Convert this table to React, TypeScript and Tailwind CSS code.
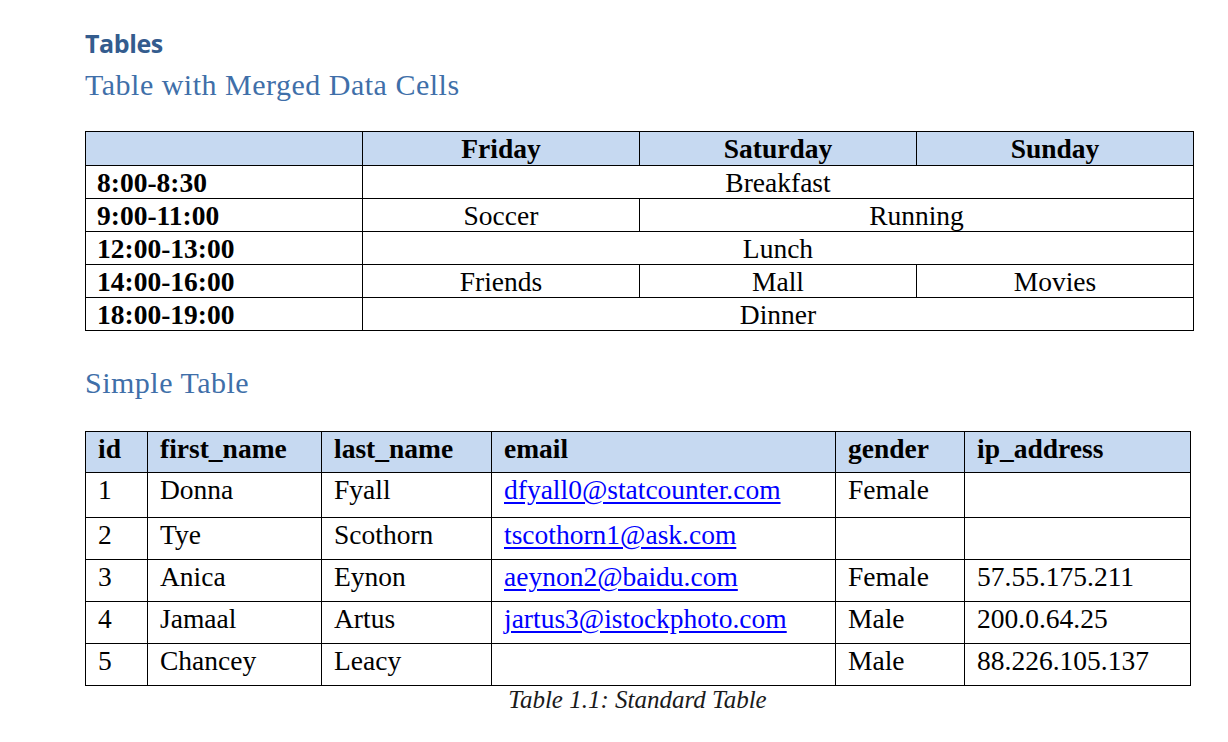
import React from 'react';

const serif = "font-['Liberation_Serif','Times_New_Roman',serif]";

const schedule: { time: string; cells: { text: string; span: number }[] }[] = [
  { time: '8:00-8:30',   cells: [{ text: 'Breakfast', span: 3 }] },
  { time: '9:00-11:00',  cells: [{ text: 'Soccer', span: 1 }, { text: 'Running', span: 2 }] },
  { time: '12:00-13:00', cells: [{ text: 'Lunch', span: 3 }] },
  { time: '14:00-16:00', cells: [{ text: 'Friends', span: 1 }, { text: 'Mall', span: 1 }, { text: 'Movies', span: 1 }] },
  { time: '18:00-19:00', cells: [{ text: 'Dinner', span: 3 }] },
];

interface Person { id: number; first: string; last: string; email: string; gender: string; ip: string }

const people: Person[] = [
  { id: 1, first: 'Donna',   last: 'Fyall',    email: 'dfyall0@statcounter.com', gender: 'Female', ip: '' },
  { id: 2, first: 'Tye',     last: 'Scothorn', email: 'tscothorn1@ask.com',      gender: '',       ip: '' },
  { id: 3, first: 'Anica',   last: 'Eynon',    email: 'aeynon2@baidu.com',       gender: 'Female', ip: '57.55.175.211' },
  { id: 4, first: 'Jamaal',  last: 'Artus',    email: 'jartus3@istockphoto.com', gender: 'Male',   ip: '200.0.64.25' },
  { id: 5, first: 'Chancey', last: 'Leacy',    email: '',                        gender: 'Male',   ip: '88.226.105.137' },
];

const td1 = 'border border-black p-0 pt-px align-top leading-[31px] text-center';
const td2 = 'border border-black p-0 pt-[1px] pl-[12px] align-top leading-[31px] text-left';

export default function App() {
  return (
    <div className="min-h-[742px] w-[1228px] bg-white pl-[85px] pt-[27px] text-black">

      {/* ── Headings ─────────────────────────────────────── */}
      <h1 className="font-['Open_Sans',sans-serif] text-[25px] font-bold leading-[32px] tracking-[-0.4px] text-[#345C8E]">
        Tables
      </h1>
      <h2 className={`${serif} mt-[8px] text-[30px] leading-[36px] tracking-[0.5px] text-[#3F6FA9]`}>
        Table with Merged Data Cells
      </h2>

      {/* ── Merged cells table ───────────────────────────── */}
      <table className={`${serif} mt-[28px] w-[1108px] table-fixed border-collapse text-[27.5px]`}>
        <colgroup>
          <col className="w-[277px]" />
          <col className="w-[277px]" />
          <col className="w-[277px]" />
          <col className="w-[277px]" />
        </colgroup>
        <thead>
          <tr className="h-[34px] bg-[#C6D9F1]">
            <th className={td1}></th>
            <th className={`${td1} font-bold`}>Friday</th>
            <th className={`${td1} font-bold`}>Saturday</th>
            <th className={`${td1} font-bold`}>Sunday</th>
          </tr>
        </thead>
        <tbody>
          {schedule.map(r => (
            <tr key={r.time} className="h-[33px]">
              <td className={`${td1} pl-[11px] text-left font-bold`}>{r.time}</td>
              {r.cells.map(c => (
                <td key={c.text} colSpan={c.span} className={td1}>{c.text}</td>
              ))}
            </tr>
          ))}
        </tbody>
      </table>

      <h2 className={`${serif} mt-[34px] text-[30px] leading-[36px] tracking-[0.5px] text-[#3F6FA9]`}>
        Simple Table
      </h2>

      {/* ── Simple table ─────────────────────────────────── */}
      <table className={`${serif} mt-[30px] w-[1105px] table-fixed border-collapse text-[27.5px]`}>
        <colgroup>
          <col className="w-[62px]" />
          <col className="w-[174px]" />
          <col className="w-[170px]" />
          <col className="w-[344px]" />
          <col className="w-[129px]" />
          <col className="w-[226px]" />
        </colgroup>
        <thead>
          <tr className="h-[41px] bg-[#C6D9F1]">
            {['id', 'first_name', 'last_name', 'email', 'gender', 'ip_address'].map(h => (
              <th key={h} className={`${td2} font-bold`}>{h}</th>
            ))}
          </tr>
        </thead>
        <tbody>
          {people.map((p, i) => (
            <tr key={p.id} className={i === 0 ? 'h-[45px]' : 'h-[42px]'}>
              <td className={td2}>{p.id}</td>
              <td className={td2}>{p.first}</td>
              <td className={td2}>{p.last}</td>
              <td className={td2}>
                {p.email && <a href="#" className="text-[#0000FF] underline underline-offset-[3px]">{p.email}</a>}
              </td>
              <td className={td2}>{p.gender}</td>
              <td className={td2}>{p.ip}</td>
            </tr>
          ))}
        </tbody>
      </table>
      <p className={`${serif} w-[1105px] text-center text-[25px] italic leading-[28px] text-[#1a1a1a]`}>
        Table 1.1: Standard Table
      </p>
    </div>
  );
}
